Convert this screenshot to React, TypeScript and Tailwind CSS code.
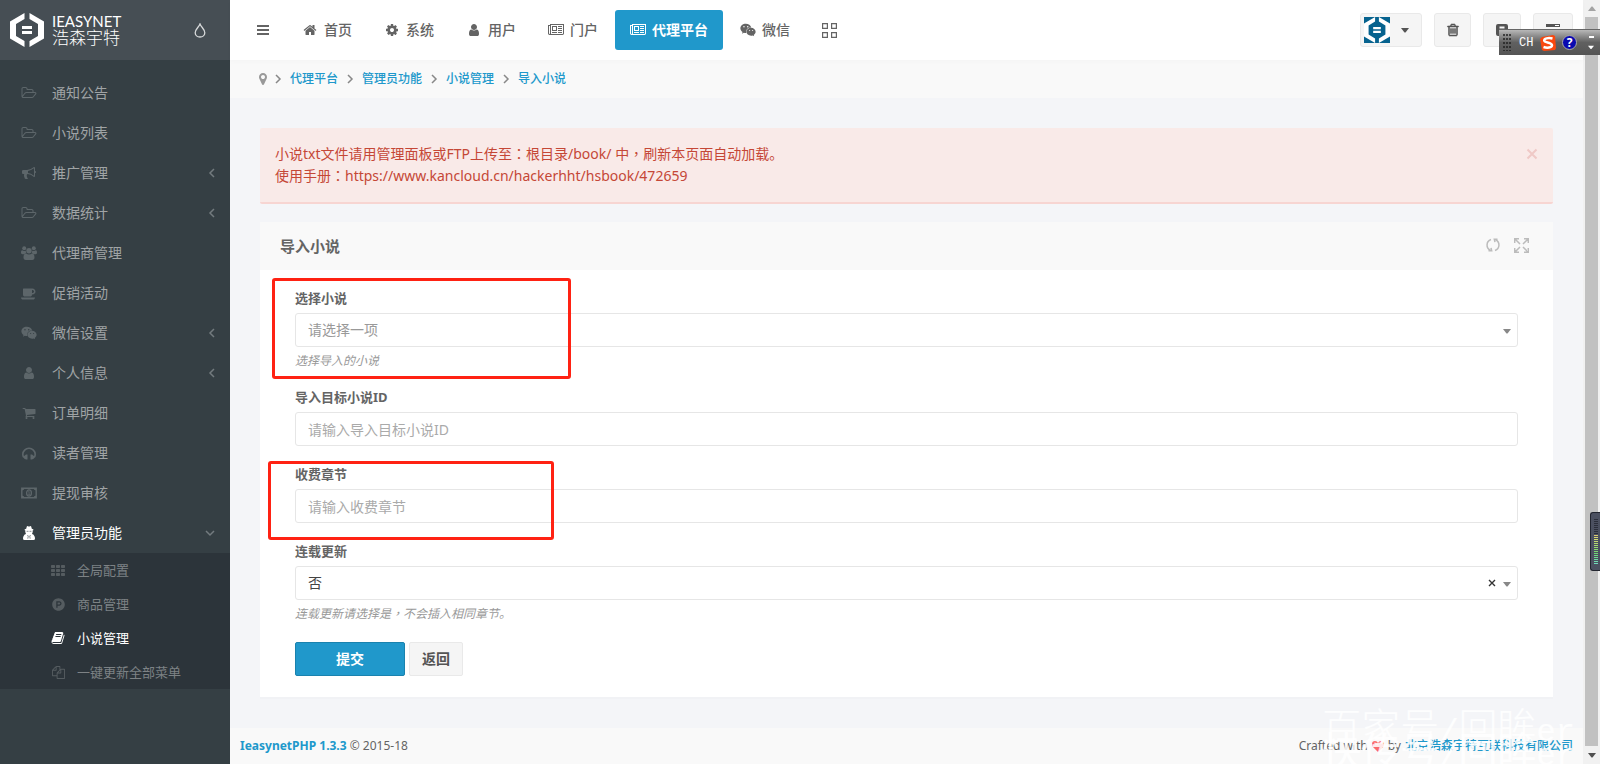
import type { ReactNode } from "react"
import { FaProductHunt, FaWeixin } from "react-icons/fa"

interface IconProps {
  className?: string
}

// Classic 1792-unit icon outlines
const paths = {
  home: "M1472 992v480q0 26-19 45t-45 19h-384v-384h-256v384h-384q-26 0-45-19t-19-45v-480q0-1 .5-3t.5-3l575-474 575 474q1 2 1 6zm223-69l-62 74q-8 9-21 11h-3q-13 0-21-7l-692-577-692 577q-12 8-24 7-13-2-21-11l-62-74q-8-10-7-23.5t11-21.5l719-599q32-26 76-26t76 26l244 204v-195q0-14 9-23t23-9h192q14 0 23 9t9 23v408l219 182q10 8 11 21.5t-7 23.5z",
  cog: "M1152 896q0-106-75-181t-181-75-181 75-75 181 75 181 181 75 181-75 75-181zm512-109v222q0 12-8 23t-20 13l-185 28q-19 54-39 91 35 50 107 138 10 12 10 25t-9 23q-27 37-99 108t-94 71q-12 0-26-9l-138-108q-44 23-91 38-16 136-29 186-7 28-36 28h-222q-14 0-24.5-8.5t-11.5-21.5l-28-184q-49-16-90-37l-141 107q-10 9-25 9-14 0-25-11-126-114-165-168-7-10-7-23 0-12 8-23 15-21 51-66.5t54-70.5q-27-50-41-99l-183-27q-13-2-21-12.5t-8-23.5v-222q0-12 8-23t19-13l186-28q14-46 39-92-40-57-107-138-10-12-10-24 0-10 9-23 26-36 98.5-107.5t94.5-71.5q13 0 26 10l138 107q44-23 91-38 16-136 29-186 7-28 36-28h222q14 0 24.5 8.5t11.5 21.5l28 184q49 16 90 37l142-107q9-9 24-9 13 0 25 10 129 119 165 170 7 8 7 22 0 12-8 23-15 21-51 66.5t-54 70.5q26 50 41 98l183 28q13 2 21 12.5t8 23.5z",
  user: "M1536 1399q0 109-62.5 187t-150.5 78h-854q-88 0-150.5-78t-62.5-187q0-85 8.5-160.5t31.5-152 58.5-131 94-89 134.5-34.5q131 128 313 128t313-128q76 0 134.5 34.5t94 89 58.5 131 31.5 152 8.5 160.5zm-256-887q0 159-112.5 271.5t-271.5 112.5-271.5-112.5-112.5-271.5 112.5-271.5 271.5-112.5 271.5 112.5 112.5 271.5z",
  cart: "M704 1536q0 52-38 90t-90 38-90-38-38-90 38-90 90-38 90 38 38 90zm896 0q0 52-38 90t-90 38-90-38-38-90 38-90 90-38 90 38 38 90zm128-1088v512q0 24-16.5 42.5t-40.5 21.5l-1044 122q13 60 13 70 0 16-24 64h920q26 0 45 19t19 45-19 45-45 19h-1024q-26 0-45-19t-19-45q0-11 8-31.5t16-36 21.5-40 15.5-29.5l-177-823h-204q-26 0-45-19t-19-45 19-45 45-19h256q16 0 28.5 6.5t19.5 15.5 13 24.5 8 26 5.5 29.5 4.5 26h1201q26 0 45 19t19 45z",
  bullhorn: "M1664 640q53 0 90.5 37.5t37.5 90.5-37.5 90.5-90.5 37.5v384q0 52-38 90t-90 38q-417-347-812-380-58 19-91 66t-31 100.5 40 92.5q-20 33-23 65.5t6 58 33.5 55 48 50 61.5 50.5q-29 58-111.5 83t-168.5 11.5-132-55.5q-7-23-29.5-87.5t-32-94.5-23-89-15-101 3.5-98.5 22-110.5h-122q-66 0-113-47t-47-113v-192q0-66 47-113t113-47h480q435 0 896-384 52 0 90 38t38 90v384zm-128 604v-954q-394 302-768 343v270q377 42 768 341z",
  trash: "M704 736v576q0 14-9 23t-23 9h-64q-14 0-23-9t-9-23v-576q0-14 9-23t23-9h64q14 0 23 9t9 23zm256 0v576q0 14-9 23t-23 9h-64q-14 0-23-9t-9-23v-576q0-14 9-23t23-9h64q14 0 23 9t9 23zm256 0v576q0 14-9 23t-23 9h-64q-14 0-23-9t-9-23v-576q0-14 9-23t23-9h64q14 0 23 9t9 23zm128 724v-948h-896v948q0 22 7 40.5t14.5 27 10.5 8.5h832q3 0 10.5-8.5t14.5-27 7-40.5zm-672-1076h448l-48-117q-7-9-17-11h-317q-10 2-17 11zm928 32v64q0 14-9 23t-23 9h-96v948q0 83-47 143.5t-113 60.5h-832q-66 0-113-58.5t-47-141.5v-952h-96q-14 0-23-9t-9-23v-64q0-14 9-23t23-9h309l70-167q15-37 54-63t79-26h320q40 0 79 26t54 63l70 167h309q14 0 23 9t9 23z",
  marker: "M1152 640q0-106-75-181t-181-75-181 75-75 181 75 181 181 75 181-75 75-181zm256 0q0 109-33 179l-364 774q-16 33-47.5 52t-67.5 19-67.5-19-46.5-52l-365-774q-33-70-33-179 0-212 150-362t362-150 362 150 150 362z",
  files: "M1696 384q40 0 68 28t28 68v1216q0 40-28 68t-68 28h-960q-40 0-68-28t-28-68v-288h-544q-40 0-68-28t-28-68v-672q0-40 20-88t48-76l408-408q28-28 76-48t88-20h416q40 0 68 28t28 68v328q68-40 128-40h416zm-544 213l-299 299h299v-299zm-640-384l-299 299h299v-299zm196 647l316-316v-416h-384v416q0 40-28 68t-68 28h-416v640h512v-256q0-40 20-88t48-76zm956 804v-1152h-384v416q0 40-28 68t-68 28h-416v640h896z",
  book: "M1703 478q40 57 18 129l-275 906q-19 64-76.5 107.5t-122.5 43.5h-923q-77 0-148.5-53.5t-99.5-131.5q-24-67-2-127 0-4 3-27t4-37q1-8-3-21.5t-3-19.5q2-11 8-21t16.5-23.5 16.5-23.5q23-38 45-91.5t30-91.5q3-10 .5-30t-.5-28q3-11 17-28t17-23q21-36 42-92t25-90q1-9-2.5-32t.5-28q4-13 22-30.5t22-22.5q19-26 42.5-84.5t27.5-96.5q1-8-3-25.5t-2-26.5q2-8 9-18t18-23 17-21q8-12 16.5-30.5t15-35 16-36 19.5-32 26.5-23.5 36-11.5 47.5 5.5l-1 3q38-9 51-9h761q74 0 114 56t18 130l-274 906q-36 119-71.5 153.5t-128.5 34.5h-869q-27 0-38 15-11 16-1 43 24 70 144 70h923q29 0 56-15.5t35-41.5l300-987q7-22 5-57 38 15 59 43zm-1064 2q-4 13 2 22.5t20 9.5h608q13 0 25.5-9.5t16.5-22.5l21-64q4-13-2-22.5t-20-9.5h-608q-13 0-25.5 9.5t-16.5 22.5zm-83 256q-4 13 2 22.5t20 9.5h608q13 0 25.5-9.5t16.5-22.5l21-64q4-13-2-22.5t-20-9.5h-608q-13 0-25.5 9.5t-16.5 22.5z",
  th: "M96 256h320q96 0 96 96v192q0 96-96 96H96q-96 0-96-96V352q0-96 96-96zM736 256h320q96 0 96 96v192q0 96-96 96H736q-96 0-96-96V352q0-96 96-96zM1376 256h320q96 0 96 96v192q0 96-96 96h-320q-96 0-96-96V352q0-96 96-96zM96 768h320q96 0 96 96v192q0 96-96 96H96q-96 0-96-96V864q0-96 96-96zM736 768h320q96 0 96 96v192q0 96-96 96H736q-96 0-96-96V864q0-96 96-96zM1376 768h320q96 0 96 96v192q0 96-96 96h-320q-96 0-96-96V864q0-96 96-96zM96 1280h320q96 0 96 96v192q0 96-96 96H96q-96 0-96-96v-192q0-96 96-96zM736 1280h320q96 0 96 96v192q0 96-96 96H736q-96 0-96-96v-192q0-96 96-96zM1376 1280h320q96 0 96 96v192q0 96-96 96h-320q-96 0-96-96v-192q0-96 96-96z",
}

const widePaths = {
  folder: "M1845 931q0-35-53-35h-1088q-40 0-85.5 21.5t-71.5 52.5l-294 363q-18 24-18 40 0 35 53 35h1088q40 0 86-22t71-53l294-363q18-22 18-39zm-1141-163h768v-160q0-40-28-68t-68-28h-576q-40 0-68-28t-28-68v-64q0-40-28-68t-68-28h-320q-40 0-68 28t-28 68v853l256-315q44-53 116-87.5t140-34.5zm1269 163q0 62-46 120l-295 363q-43 53-116 87.5t-140 34.5h-1088q-92 0-158-66t-66-158v-960q0-92 66-158t158-66h320q92 0 158 66t66 158v32h544q92 0 158 66t66 158v160h192q54 0 99 24.5t67 70.5q15 32 15 68z",
  coffee: "M1664 704q0-80-56-136t-136-56h-64v384h64q80 0 136-56t56-136zm-1664 768h1792q0 106-75 181t-181 75h-1280q-106 0-181-75t-75-181zm1856-768q0 159-112.5 271.5t-271.5 112.5h-64v32q0 92-66 158t-158 66h-704q-92 0-158-66t-66-158v-736q0-26 19-45t45-19h1152q159 0 271.5 112.5t112.5 271.5z",
  news: "M1024 512h-384v384h384v-384zm128 640v128h-640v-128h640zm0-768v640h-640v-640h640zm640 768v128h-512v-128h512zm0-256v128h-512v-128h512zm0-256v128h-512v-128h512zm0-256v128h-512v-128h512zm-1536 960v-960h-128v960q0 26 19 45t45 19 45-19 19-45zm1664 0v-1088h-1536v1088q0 33-11 64h1483q26 0 45-19t19-45zm128-1216v1216q0 80-56 136t-136 56h-1664q-80 0-136-56t-56-136v-1088h256v-128h1792z",
}

function Icon({ name, className = "size-3.5" }: IconProps & { name: keyof typeof paths }) {
  return (
    <svg viewBox="0 0 1792 1792" fill="currentColor" className={className} aria-hidden="true">
      <path d={paths[name]} />
    </svg>
  )
}

function WideIcon({ name, className = "h-3.5 w-4" }: IconProps & { name: keyof typeof widePaths }) {
  return (
    <svg viewBox="0 0 2048 1792" fill="currentColor" className={className} aria-hidden="true">
      <path d={widePaths[name]} />
    </svg>
  )
}

function UsersIcon() {
  return (
    <svg viewBox="0 0 16 14" className="h-3.5 w-4" fill="currentColor" aria-hidden="true">
      <circle cx="3.200" cy="2.200" r="2" />
      <circle cx="12.800" cy="2.200" r="2" />
      <path d="M1.200 4.200c1.300.9 2.600.9 3.700.2-.2 1.300.1 2.100.7 2.900-.9 0-1.700.3-2.300.9H1.500C.5 8.200 0 7.700 0 6.800c0-1.200.2-2.600 1.200-2.600zM14.800 4.200c-1.300.9-2.600.9-3.700.2.2 1.300-.1 2.100-.7 2.900.9 0 1.700.3 2.300.9h1.800c1 0 1.500-.5 1.500-1.400 0-1.200-.2-2.600-1.200-2.600z" />
      <circle cx="8" cy="4.700" r="2.700" />
      <path d="M5 7.400c1.900 1.500 4.100 1.500 6 0 1.900.1 2.500 2 2.500 4.200 0 1.500-.8 2.400-2.200 2.400H4.700c-1.400 0-2.200-.9-2.200-2.400 0-2.200.6-4.100 2.500-4.200z" />
    </svg>
  )
}

function HeadphonesIcon() {
  return (
    <svg viewBox="0 0 14 13" className="h-[13px] w-3.5" fill="currentColor" aria-hidden="true">
      <path d="M1.800 10.500C.9 9.300.8 8.300.8 7.300a6.200 6 0 0 1 12.400 0c0 1-.1 2-1 3.200" fill="none" stroke="currentColor" strokeWidth="1.600" />
      <path d="M1.500 9.500 4 7.500h1.500v5H4l-2-1zM12.500 9.500 10 7.500H8.500v5H10l2-1z" />
    </svg>
  )
}

function SecretIcon() {
  return (
    <svg viewBox="0 0 12 14" className="h-3.5 w-3" fill="currentColor" aria-hidden="true">
      <path d="M3.200 2.800 3.800.6Q4.200-.2 5 .2q1 .4 2 0 .8-.4 1.200.4l.6 2.200q1.700.4 1.700.9T9.600 4.500q.3 1.400-.2 2.600l-.4.900q1.500.4 2.200 1.700.8 1.300.8 2.800 0 1.500-1.500 1.500h-9Q0 14 0 12.500q0-1.500.8-2.800.7-1.300 2.200-1.700L2.600 7.100q-.5-1.200-.2-2.600-.9-.3-.9-.8t1.700-.9z" />
      <path d="m4.300 9 1 1-.5 2.700M7.700 9l-1 1 .5 2.700M3.600 5.300h1.900M6.500 5.300h1.900" fill="none" stroke="#353f44" strokeWidth=".6" />
    </svg>
  )
}

function MoneyIcon() {
  return (
    <svg viewBox="0 0 16 12" className="h-3 w-4" fill="none" stroke="currentColor" aria-hidden="true">
      <path d="M.8 1.300h14.400v9.400H.8z" strokeWidth="1.400" />
      <path d="M1 1h2.600Q3.300 3.300 1 3.600zM15 1h-2.600q.3 2.300 2.600 2.600zM1 11V8.400q2.300.3 2.600 2.600zM15 11V8.400q-2.300.3-2.600 2.600z" fill="currentColor" stroke="none" />
      <ellipse cx="8" cy="6" rx="2.400" ry="3.100" strokeWidth="1.300" />
      <path d="M7.200 5l.9-.6v3M7.100 7.400h2" strokeWidth=".8" />
    </svg>
  )
}

function Chevron({ className = "" }: IconProps) {
  return (
    <svg viewBox="0 0 8 10" className={`h-2.5 w-2 ${className}`} fill="none" stroke="currentColor" strokeWidth="1.500" aria-hidden="true">
      <path d="M6 1 2 5l4 4" />
    </svg>
  )
}

function Caret({ className = "" }: IconProps) {
  return (
    <svg viewBox="0 0 8 5" className={`h-[5px] w-2 ${className}`} fill="currentColor" aria-hidden="true">
      <path d="M0 0h8L4.500 4.500h-1z" />
    </svg>
  )
}

function LogoMark({ className = "" }: IconProps) {
  return (
    <svg viewBox="0 0 34 34" className={className} fill="currentColor" aria-hidden="true">
      <path d="M14.500 0v6L6 11v12l8.500 5v6L0 25.500v-17zM19.500 0v6L28 11v12l-8.500 5v6L34 25.500v-17z" />
      <path d="M12 13h10v3H12zM12 18h10v3H12z" />
    </svg>
  )
}

// Full-width punctuation centred in its square
function Mark({ children }: { children: string }) {
  return <span className="font-['Noto_Sans_CJK_TC',sans-serif] leading-none">{children}</span>
}

const menu: { label: string; icon: ReactNode; arrow?: boolean }[] = [
  { label: "通知公告", icon: <WideIcon name="folder" /> },
  { label: "小说列表", icon: <WideIcon name="folder" /> },
  { label: "推广管理", icon: <Icon name="bullhorn" />, arrow: true },
  { label: "数据统计", icon: <WideIcon name="folder" />, arrow: true },
  { label: "代理商管理", icon: <UsersIcon /> },
  { label: "促销活动", icon: <WideIcon name="coffee" /> },
  { label: "微信设置", icon: <FaWeixin className="size-4" />, arrow: true },
  { label: "个人信息", icon: <Icon name="user" />, arrow: true },
  { label: "订单明细", icon: <Icon name="cart" /> },
  { label: "读者管理", icon: <HeadphonesIcon /> },
  { label: "提现审核", icon: <MoneyIcon /> },
]

const subMenu = [
  { label: "全局配置", icon: <Icon name="th" /> },
  { label: "商品管理", icon: <FaProductHunt className="size-[13px]" /> },
  { label: "小说管理", icon: <Icon name="book" />, active: true },
  { label: "一键更新全部菜单", icon: <Icon name="files" className="size-[13px]" /> },
]

const nav = [
  { label: "首页", icon: <Icon name="home" /> },
  { label: "系统", icon: <Icon name="cog" /> },
  { label: "用户", icon: <Icon name="user" /> },
  { label: "门户", icon: <WideIcon name="news" /> },
  { label: "代理平台", icon: <WideIcon name="news" />, active: true },
  { label: "微信", icon: <FaWeixin className="size-4" /> },
]

const crumbs = ["代理平台", "管理员功能", "小说管理", "导入小说"]

function Sidebar() {
  return (
    <aside className="flex w-[230px] shrink-0 flex-col bg-[#353f44] text-sm text-[#a0a4a6]">
      <div className="flex h-15 items-center justify-between bg-[#464e54] pr-6 pl-2.5 text-white">
        <a href="#" className="flex items-center gap-2">
          <LogoMark className="size-[34px]" />
          <span className="flex flex-col">
            <span className="font-[Lato] text-[15px] leading-4">IEASYNET</span>
            <span className="text-[17px] leading-[18px] font-light">浩森宇特</span>
          </span>
        </a>
        <button type="button" aria-label="主题颜色" className="text-[#d8dadb]">
          <svg viewBox="0 0 12 15" className="h-[15px] w-3" fill="none" stroke="currentColor" strokeWidth="1.300">
            <path d="M6 1C5 4 1.200 6.300 1.200 9.700a4.800 4.300 0 0 0 9.600 0C10.800 6.300 7 4 6 1z" />
          </svg>
        </button>
      </div>
      <ul className="pt-[13px]">
        {menu.map((item) => (
          <li key={item.label}>
            <a href="#" className="flex h-10 items-center pr-3.5 pl-5">
              <span className="mr-3.5 flex w-[18px] justify-center text-[#5d666a]">{item.icon}</span>
              {item.label}
              {item.arrow && <Chevron className="ml-auto text-[#737b7f]" />}
            </a>
          </li>
        ))}
        <li>
          <a href="#" className="flex h-10 items-center pr-4 pl-5 text-white">
            <span className="mr-3.5 flex w-[18px] justify-center">
              <SecretIcon />
            </span>
            管理员功能
            <Chevron className="ml-auto -rotate-90 text-[#737b7f]" />
          </a>
          <ul className="bg-[#2c343a] text-[13px] text-[#7d8285]">
            {subMenu.map((item) => (
              <li key={item.label}>
                <a href="#" className={`flex h-[34px] items-center pl-[51px] ${item.active ? "text-white" : ""}`}>
                  <span className={`mr-3 flex w-3.5 justify-center ${item.active ? "" : "text-[#555c60]"}`}>{item.icon}</span>
                  {item.label}
                </a>
              </li>
            ))}
          </ul>
        </li>
      </ul>
    </aside>
  )
}

function Header() {
  const box = "flex h-[34px] items-center rounded-[3px] border border-[#e9e9e9] bg-[#f5f5f5] text-[#545454]"
  return (
    <header className="z-10 flex h-15 items-center justify-between bg-white pr-2.5 pl-[18px] text-[#646464] shadow-[0_2px_5px_rgba(0,0,0,0.02)]">
      <nav className="flex items-center">
        <button type="button" aria-label="菜单" className="mr-[9px] flex h-10 w-[30px] items-center justify-center">
          <svg viewBox="0 0 12 10" className="h-2.5 w-3" fill="currentColor">
            <path d="M0 0h12v2H0zM0 4h12v2H0zM0 8h12v2H0z" />
          </svg>
        </button>
        <ul className="flex items-center gap-0.5 text-sm font-medium">
          {nav.map((item) => (
            <li key={item.label}>
              <a
                href="#"
                className={`flex h-10 items-center gap-1.5 rounded-[3px] px-[15px] ${item.active ? "bg-[#2098cb] font-bold text-white" : ""}`}
              >
                <span className="flex w-4 justify-center">{item.icon}</span>
                {item.label}
              </a>
            </li>
          ))}
          <li>
            <a href="#" aria-label="全部应用" className="flex h-10 items-center px-[15px]">
              <svg viewBox="0 0 15 15" className="size-[15px]" fill="none" stroke="currentColor" strokeWidth="1.200">
                <path d="M.6.6h4.800v4.800H.6zM9.600.6h4.800v4.800H9.600zM.6 9.600h4.800v4.800H.6zM9.600 9.600h4.800v4.800H9.600z" />
              </svg>
            </a>
          </li>
        </ul>
      </nav>
      <div className="flex items-center gap-3">
        <button type="button" aria-label="账户" className={`${box} w-[62px] gap-[11px] pl-[3px]`}>
          <span className="flex size-[26px] items-center justify-center bg-[#07638f] text-white">
            <LogoMark className="size-[26px]" />
          </span>
          <Caret />
        </button>
        <button type="button" aria-label="清除缓存" className={`${box} w-[37px] justify-center`}>
          <Icon name="trash" className="size-3.5 stroke-current stroke-[70]" />
        </button>
        <button type="button" aria-label="锁定" className={`${box} w-[38px] justify-center`}>
          <svg viewBox="0 0 12 12" className="size-3" fill="currentColor">
            <path fillRule="evenodd" d="M2 0h8q2 0 2 2v8q0 2-2 2H2q-2 0-2-2V2Q0 0 2 0zm1.500 2.500v2h5v-2z" />
          </svg>
        </button>
        <button type="button" aria-label="侧栏" className={`${box} w-10 justify-center`}>
          <svg viewBox="0 0 14 13" className="h-[13px] w-3.5">
            <path d="M0 0h14v3H0zM0 5h14v3H0zM0 10h14v3H0z" fill="currentColor" />
            <path d="M9 1h4v1H9zM5 6h8v1H5zM11 11h2v1h-2z" fill="#fff" />
          </svg>
        </button>
      </div>
    </header>
  )
}

const control = "h-[34px] w-full appearance-none rounded-[3px] border border-[#e6e6e6] bg-white px-3 text-sm placeholder:text-[#aaa]"

function Field({ id, label, hint, children }: { id: string; label: string; hint?: ReactNode; children: ReactNode }) {
  return (
    <div className="relative">
      <label htmlFor={id} className="mb-1.5 block text-[13px] leading-[17px] font-bold">
        {label}
      </label>
      {children}
      {hint && <p className="mt-1.5 h-4 text-xs leading-4 text-[#999] italic">{hint}</p>}
    </div>
  )
}

function ImportForm() {
  return (
    <section className="mt-[18px] bg-white shadow-[0_2px_0_rgba(0,0,0,0.01)]">
      <div className="flex h-12 items-center justify-between bg-[#f9f9f9] pr-6 pl-5">
        <h3 className="text-[15px] font-bold">导入小说</h3>
        <div className="flex gap-3.5 pb-0.5 text-[#bcbcbc]">
          <button type="button" aria-label="刷新">
            <svg viewBox="0 0 14 14" className="size-3.5" fill="none" stroke="currentColor" strokeWidth="1.500">
              <path d="M5 1.500a5.800 5.800 0 0 0-.5 10.800M9 12.500A5.800 5.800 0 0 0 9.500 1.700" />
              <path d="M2.500 12.800h3.200L5 9.800M11.500 1.200H8.300l.7 3" />
            </svg>
          </button>
          <button type="button" aria-label="全屏">
            <svg viewBox="0 0 15 15" className="size-[15px]" fill="none" stroke="currentColor" strokeWidth="1.500">
              <path d="M.7 5V.7H5M10 .7h4.300V5M14.300 10v4.300H10M5 14.300H.7V10M1 1l5 5M14 1 9 6M14 14 9 9M1 14l5-5" />
            </svg>
          </button>
        </div>
      </div>
      <form className="flex flex-col gap-5 px-[35px] pt-5 pb-[21px]" onSubmit={(e) => e.preventDefault()}>
        <Field id="book" label="选择小说" hint="选择导入的小说">
          <div className="relative">
            <select id="book" defaultValue="" className={`${control} text-[#999]`}>
              <option value="">请选择一项</option>
            </select>
            <Caret className="pointer-events-none absolute top-4 right-[7px] text-[#888]" />
          </div>
          <div className="pointer-events-none absolute -top-3 -bottom-2.5 -left-[23px] w-[299px] rounded-[3px] border-3 border-[#ff2213]" />
        </Field>
        <Field id="target" label="导入目标小说ID">
          <input id="target" type="text" placeholder="请输入导入目标小说ID" className={control} />
        </Field>
        <Field id="chapter" label="收费章节">
          <input id="chapter" type="text" placeholder="请输入收费章节" className={control} />
          <div className="pointer-events-none absolute -top-[5px] -bottom-[17px] -left-[27px] w-[286px] rounded-[3px] border-3 border-[#ff2213]" />
        </Field>
        <Field
          id="serial"
          label="连载更新"
          hint={
            <>
              连载更新请选择是<Mark>，</Mark>不会插入相同章节。
            </>
          }
        >
          <div className="relative">
            <select id="serial" defaultValue="0" className={`${control} text-[#444]`}>
              <option value="0">否</option>
              <option value="1">是</option>
            </select>
            <button type="button" aria-label="清除" className="absolute top-0 right-[22px] h-full text-[#333]">
              <svg viewBox="0 0 8 8" className="size-2" fill="none" stroke="currentColor" strokeWidth="1.400">
                <path d="m1 1 6 6M7 1 1 7" />
              </svg>
            </button>
            <Caret className="pointer-events-none absolute top-4 right-[7px] text-[#888]" />
          </div>
        </Field>
        <div className="flex gap-1 text-sm font-bold">
          <button type="submit" className="h-[34px] w-[110px] rounded-xs border border-[#1a82ae] bg-[#2098cb] text-white">
            提交
          </button>
          <button type="button" className="h-[34px] w-[54px] rounded-xs border border-[#e9e9e9] bg-[#f5f5f5] text-[#545454]">
            返回
          </button>
        </div>
      </form>
    </section>
  )
}

function Scrollbar() {
  return (
    <div className="flex w-[17px] shrink-0 flex-col items-center justify-between bg-[#f1f1f1]" aria-hidden="true">
      <div className="flex h-[17px] items-center">
        <Caret className="rotate-180 text-[#a3a3a3]" />
      </div>
      <div className="w-[13px] grow bg-[#c1c1c1]" />
      <div className="flex h-[18px] items-center">
        <Caret className="text-[#505050]" />
      </div>
    </div>
  )
}

function ImeBar() {
  return (
    <div className="absolute top-[29px] right-0 z-20 flex h-[26px] w-[101px] items-center border-t border-[#666] bg-linear-to-b from-[#b8b8b8] via-[#606060] to-[#555] pl-1 text-white">
      <svg viewBox="0 0 8 17" className="mr-2 h-[17px] w-2">
        <path d="M1 0v17M4 0v17M7 0v17" stroke="#222" strokeWidth="1.500" strokeDasharray="2 2" />
      </svg>
      <span className="w-[21px] font-['Liberation_Mono'] text-xs">CH</span>
      <svg viewBox="0 0 16 16" className="size-4">
        <path d="m2 2 11-2 2 1 1 12-1 2-11 1-2-1L0 4z" fill="#f9480f" />
        <path d="M12.500 3.500C8 2.500 4 3.500 4.200 5.700 4.400 7.800 12 7.300 12 10.300c0 2.500-5 3-8.500 1.700" fill="none" stroke="#fff" strokeWidth="2.500" />
      </svg>
      <span className="ml-1.5 flex size-[15px] items-center justify-center rounded-full border border-[#aaa] bg-[#0a0ab0] text-xs font-bold">?</span>
      <span className="ml-auto flex flex-col items-center gap-[7px] pr-1.5">
        <span className="h-0.5 w-[5px] bg-white" />
        <Caret className="w-[6px]" />
      </span>
    </div>
  )
}

// Desktop volume meter docked at the window edge
function LevelMeter() {
  return (
    <div className="absolute top-[512px] right-0 z-20 flex h-[59px] w-2.5 flex-col items-center justify-center gap-px rounded-l-[3px] border-y border-l border-[#22252f] bg-[#4b5060]">
      {Array.from({ length: 23 }, (_, i) => (
        <span
          key={i}
          className="h-px w-1"
          style={{ backgroundColor: i < 8 ? "#2b2e3a" : `hsl(${50 + (i - 8) * 8} 60% 65%)` }}
        />
      ))}
    </div>
  )
}

function Stamp({ site, className = "" }: IconProps & { site: string }) {
  return (
    <p className={`h-6 ${className}`}>
      {site}
      <span className="font-['Liberation_Mono'] text-[32px] leading-none">/</span>
      回眸
      <span className="font-['Liberation_Mono'] text-[32px] leading-none">er</span>
    </p>
  )
}

function App() {
  return (
    <div className="relative flex min-h-screen overflow-hidden bg-[#f4f5f8] font-['Noto_Sans','Noto_Sans_CJK_SC',sans-serif] text-[#646464]">
      <Sidebar />
      <div className="flex min-w-0 grow flex-col">
        <Header />
        <ol className="flex h-[38px] items-center bg-[#f9f9f9] pl-[26px] text-xs font-medium text-[#2098cb]">
          <li className="-mr-1 text-[#999]">
            <Icon name="marker" />
          </li>
          {crumbs.map((crumb) => (
            <li key={crumb} className="flex items-center">
              <Chevron className="mx-2 rotate-180 text-[#888]" />
              <a href="#">{crumb}</a>
            </li>
          ))}
        </ol>
        <main className="grow px-[30px] pt-[30px] pb-[31px]">
          <div role="alert" className="flex items-start justify-between rounded-xs border-b-2 border-[#f7d5d2] bg-[#f9eae8] p-[15px] text-sm leading-[22px] text-[#c54736]">
            <p>
              小说txt文件请用管理面板或FTP上传至<Mark>：</Mark>根目录/book/ 中<Mark>，</Mark>刷新本页面自动加载。
              <br />
              使用手册<Mark>：</Mark>https://www.kancloud.cn/hackerhht/hsbook/472659
            </p>
            <button type="button" aria-label="关闭" className="flex h-[22px] items-center text-[#efc9c6]">
              <svg viewBox="0 0 12 12" className="size-3" fill="none" stroke="currentColor" strokeWidth="2">
                <path d="m1.500 1.500 9 9M10.500 1.500l-9 9" />
              </svg>
            </button>
          </div>
          <ImportForm />
        </main>
        <footer className="relative flex h-9 items-center justify-between bg-[#f9f9f9] px-2.5 text-xs">
          <p>
            <a href="#" className="font-bold text-[#2098cb]">
              IeasynetPHP 1.3.3
            </a>{" "}
            © 2015-18
          </p>
          <p className="flex items-center">
            Crafted with
            <svg viewBox="0 0 12 11" className="mx-1 h-[11px] w-3 shrink-0" fill="#fa6a6a">
              <path d="M6 11 1 6Q0 4.800 0 3.300 0 0 3 0q2 0 3 2 1-2 3-2 3 0 3 3.300Q12 4.800 11 6z" />
            </svg>
            by
            <a href="#" className="ml-1 font-medium text-[#2098cb]">
              北京浩森宇特互联科技有限公司
            </a>
          </p>
        </footer>
      </div>
      <Scrollbar />
      <ImeBar />
      <LevelMeter />
      <div className="pointer-events-none absolute right-[7px] bottom-1 z-20 font-['Noto_Sans_CJK_SC',sans-serif] text-[39px] leading-6 whitespace-nowrap text-white/85">
        <Stamp site="百家号" className="pr-[18px] font-light" />
        <Stamp site="快传号" />
      </div>
    </div>
  )
}

export default App
